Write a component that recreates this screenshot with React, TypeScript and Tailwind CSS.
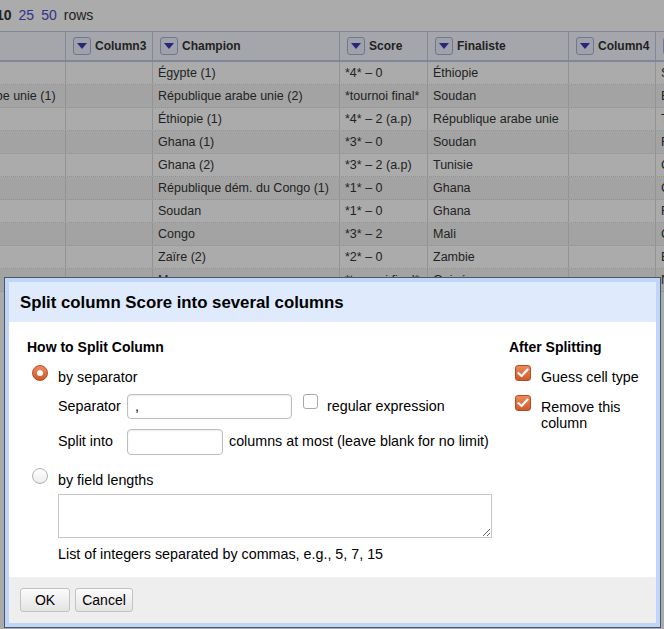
const font = "font-['Liberation_Sans',Arial,sans-serif]";

interface Row {
  prev: string;
  champion: string;
  score: string;
  finaliste: string;
  host: string;
}

const rows: Row[] = [
  { prev: "", champion: "Égypte (1)", score: "*4* – 0", finaliste: "Éthiopie", host: "Soudan" },
  { prev: "République arabe unie (1)", champion: "République arabe unie (2)", score: "*tournoi final*", finaliste: "Soudan", host: "Égypte" },
  { prev: "", champion: "Éthiopie (1)", score: "*4* – 2 (a.p)", finaliste: "République arabe unie", host: "Tunisie" },
  { prev: "", champion: "Ghana (1)", score: "*3* – 0", finaliste: "Soudan", host: "Février" },
  { prev: "", champion: "Ghana (2)", score: "*3* – 2 (a.p)", finaliste: "Tunisie", host: "Congo" },
  { prev: "", champion: "République dém. du Congo (1)", score: "*1* – 0", finaliste: "Ghana", host: "Congo" },
  { prev: "", champion: "Soudan", score: "*1* – 0", finaliste: "Ghana", host: "Février" },
  { prev: "", champion: "Congo", score: "*3* – 2", finaliste: "Mali", host: "Congo" },
  { prev: "", champion: "Zaïre (2)", score: "*2* – 0", finaliste: "Zambie", host: "Égypte" },
  { prev: "", champion: "Maroc", score: "*tournoi final*", finaliste: "Guinée", host: "Nigeria" },
];

function MenuButton() {
  return (
    <span className="flex h-[18px] w-[18px] shrink-0 items-center justify-center rounded-[3px] border border-[#a9b0d8] bg-[#eef0ff]">
      <svg width="10" height="6" viewBox="0 0 10 6">
        <polygon points="0,0 10,0 5,6" fill="#3a3ab8" />
      </svg>
    </span>
  );
}

function HeaderCell({ label, w }: { label?: string; w: string }) {
  return (
    <div className={`${w} flex h-full shrink-0 items-center gap-[4px] border-r border-[#c3cae6] pl-[7px]`}>
      {label && (
        <>
          <MenuButton />
          <span className="text-[12px] font-bold text-[#333]">{label}</span>
        </>
      )}
    </div>
  );
}

function Cell({ text, w }: { text: string; w: string }) {
  return (
    <div className={`${w} flex h-full shrink-0 items-center overflow-hidden whitespace-nowrap border-r border-[#dcdcdc] pl-[5px] text-[12.5px] text-[#333]`}>
      {text}
    </div>
  );
}

function Radio({ checked }: { checked?: boolean }) {
  if (checked) {
    return (
      <span className="flex h-[16px] w-[16px] shrink-0 items-center justify-center rounded-full border border-[#b44d22] bg-gradient-to-b from-[#ec8a5c] to-[#d0582a]">
        <span className="h-[6px] w-[6px] rounded-full bg-white" />
      </span>
    );
  }
  return (
    <span className="block h-[16px] w-[16px] shrink-0 rounded-full border border-[#b0b0b0] bg-gradient-to-b from-white to-[#ececec]" />
  );
}

function CheckBox({ checked }: { checked?: boolean }) {
  if (checked) {
    return (
      <span className="flex h-[16px] w-[16px] shrink-0 items-center justify-center rounded-[3px] border border-[#b44d22] bg-gradient-to-b from-[#ec8a5c] to-[#d0582a]">
        <svg width="12" height="10" viewBox="0 0 12 10">
          <path d="M1.5 5.2 L4.6 8 L10.5 1.6" stroke="white" strokeWidth="2.2" fill="none" strokeLinecap="round" strokeLinejoin="round" />
        </svg>
      </span>
    );
  }
  return <span className="block h-[15px] w-[15px] shrink-0 rounded-[3px] border border-[#a8a8a8] bg-white" />;
}

export default function App() {
  return (
    <div className={`${font} relative h-[629px] w-[664px] overflow-hidden bg-white`}>
      {/* page behind the dialog */}
      <div className="ml-[-4px] flex h-[31px] items-center gap-[7px] text-[14px] text-[#333]">
        <span className="font-bold">10</span>
        <span className="text-[#4c4ccc]">25</span>
        <span className="text-[#4c4ccc]">50</span>
        <span>rows</span>
      </div>

      <div className="ml-[-94px] w-[900px]">
        <div className="flex h-[31px] border-t border-b-2 border-[#bfc6e6] bg-[#f6f8ff]">
          <HeaderCell w="w-[160px]" />
          <HeaderCell w="w-[87px]" label="Column3" />
          <HeaderCell w="w-[187px]" label="Champion" />
          <HeaderCell w="w-[88px]" label="Score" />
          <HeaderCell w="w-[141px]" label="Finaliste" />
          <HeaderCell w="w-[87px]" label="Column4" />
          <HeaderCell w="w-[150px]" label="Column5" />
        </div>
        {rows.map((r, i) => (
          <div
            key={i}
            className={`flex h-[23px] border-b border-dotted border-[#d8d8d8] ${i % 2 === 1 ? "bg-[#f4f4f4]" : "bg-white"}`}
          >
            <Cell w="w-[160px]" text={r.prev} />
            <Cell w="w-[87px]" text="" />
            <Cell w="w-[187px]" text={r.champion} />
            <Cell w="w-[88px]" text={r.score} />
            <Cell w="w-[141px]" text={r.finaliste} />
            <Cell w="w-[87px]" text="" />
            <Cell w="w-[150px]" text={r.host} />
          </div>
        ))}
      </div>

      {/* dim overlay */}
      <div className="absolute inset-0 bg-[rgba(0,0,0,0.33)]" />

      {/* dialog */}
      <div className="absolute left-[4px] top-[277px] flex h-[351px] w-[657px] flex-col border border-[#48586a] bg-[#c0d6f7] p-[4px]">
        <div className="flex h-[40px] shrink-0 items-center bg-[#dfeafc] pl-[11px] pt-[1px] text-[16.8px] font-bold text-black">
          Split column Score into several columns
        </div>

        <div className="flex flex-1 bg-white pl-[18px] pt-[17px] text-[14.3px] text-black">
          <div className="flex w-[482px] shrink-0 flex-col">
            <div className="h-[16px] text-[14px] font-bold leading-[16px]">How to Split Column</div>

            <div className="mt-[10px] flex h-[22px] items-start pl-[5px]">
              <Radio checked />
              <span className="ml-[10px] mt-[1px] leading-[22px]">by separator</span>
            </div>

            <div className="mt-[7px] flex h-[25px] items-center pl-[31px]">
              <span className="w-[69px] shrink-0">Separator</span>
              <div className="flex h-[25px] w-[165px] items-center rounded-[4px] border border-[#bdbdbd] pl-[7px] shadow-[inset_0_1px_2px_rgba(0,0,0,0.08)]">
                ,
              </div>
              <span className="ml-[11px] flex self-start">
                <CheckBox />
              </span>
              <span className="ml-[9px]">regular expression</span>
            </div>

            <div className="mt-[10px] flex h-[26px] items-center pl-[31px]">
              <span className="w-[69px] shrink-0">Split into</span>
              <div className="h-[26px] w-[96px] rounded-[4px] border border-[#bdbdbd] shadow-[inset_0_1px_2px_rgba(0,0,0,0.08)]" />
              <span className="ml-[6px]">columns at most (leave blank for no limit)</span>
            </div>

            <div className="mt-[13px] flex h-[22px] items-start pl-[5px]">
              <Radio />
              <span className="ml-[10px] mt-[1px] leading-[22px]">by field lengths</span>
            </div>

            <div className="mt-[4px] pl-[31px]">
              <textarea
                readOnly
                className="block h-[44px] w-[434px] resize border border-[#c6c6c6] bg-white outline-none"
              />
            </div>

            <div className="mt-[8px] pl-[31px] leading-[16px]">
              List of integers separated by commas, e.g., 5, 7, 15
            </div>
          </div>

          <div className="flex flex-col">
            <div className="h-[16px] text-[14px] font-bold leading-[16px]">After Splitting</div>
            <div className="mt-[10px] flex items-start pl-[6px]">
              <CheckBox checked />
              <span className="ml-[10px] mt-[4px] leading-[16px]">Guess cell type</span>
            </div>
            <div className="mt-[10px] flex items-start pl-[6px]">
              <CheckBox checked />
              <span className="ml-[10px] mt-[4px] w-[100px] leading-[16px]">Remove this column</span>
            </div>
          </div>
        </div>

        <div className="flex h-[46px] shrink-0 items-start gap-[5px] bg-[#eeeeee] pl-[11px] pt-[11px]">
          <button className="h-[24px] w-[50px] rounded-[3px] border border-[#c2c2c2] bg-gradient-to-b from-[#fbfbfb] to-[#e4e4e4] text-[14px] text-black">
            OK
          </button>
          <button className="h-[24px] w-[58px] rounded-[3px] border border-[#c2c2c2] bg-gradient-to-b from-[#fbfbfb] to-[#e4e4e4] text-[14px] text-black">
            Cancel
          </button>
        </div>
      </div>
    </div>
  );
}
